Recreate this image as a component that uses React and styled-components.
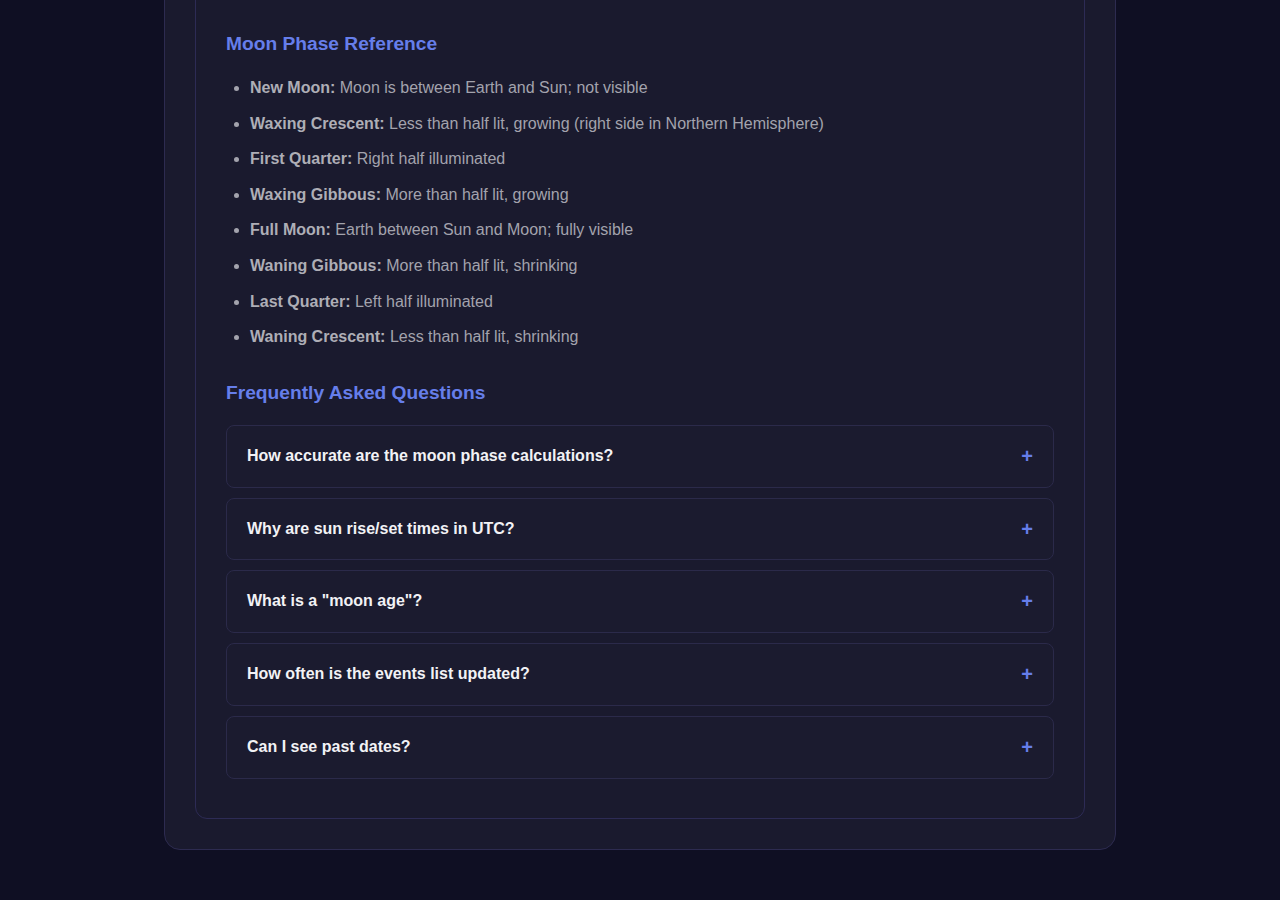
import React from 'react';
import styled, { createGlobalStyle } from 'styled-components';

const GlobalStyle = createGlobalStyle`
  html, body {
    margin: 0;
    padding: 0;
    background: #0f0f23;
    font-family: "Liberation Sans", Arial, sans-serif;
  }
`;

const Page = styled.div`
  padding: 0 0 50px;
  overflow: hidden;
`;

const OuterCard = styled.div`
  width: 952px;
  box-sizing: border-box;
  margin: -61px auto 0;
  padding: 30px;
  background: #1a1a2e;
  border: 1px solid #2d2b50;
  border-radius: 16px;
`;

const InnerCard = styled.section`
  padding: 30px;
  background: #1a1a2e;
  border: 1px solid #2d2b55;
  border-radius: 12px;
`;

const SectionTitle = styled.h3`
  margin: 32px 0 20px;
  font-size: 19.2px;
  font-weight: 700;
  color: #667eea;
  line-height: 22px;
`;

const PhaseList = styled.ul`
  margin: 0;
  padding-left: 24px;
  color: #a3a3ad;
  font-size: 16px;
`;

const PhaseItem = styled.li`
  line-height: 1.6;
  margin-bottom: 10px;

  strong {
    color: #aeaeb6;
  }
`;

const FaqList = styled.div`
  display: flex;
  flex-direction: column;
  gap: 10px;
  margin-top: 21px;
  margin-bottom: 9px;
`;

const FaqItem = styled.div`
  display: flex;
  align-items: center;
  justify-content: space-between;
  padding: 20px;
  border: 1px solid #2b2a4a;
  border-radius: 8px;
  background: #1b1b2f;
  cursor: pointer;
`;

const Question = styled.span`
  font-size: 16px;
  font-weight: 700;
  line-height: 20.8px;
  color: #f2f2f5;
`;

const Toggle = styled.span`
  font-size: 20px;
  line-height: 20.8px;
  font-weight: 700;
  color: #667eea;
`;

const phases = [
  ['New Moon:', 'Moon is between Earth and Sun; not visible'],
  ['Waxing Crescent:', 'Less than half lit, growing (right side in Northern Hemisphere)'],
  ['First Quarter:', 'Right half illuminated'],
  ['Waxing Gibbous:', 'More than half lit, growing'],
  ['Full Moon:', 'Earth between Sun and Moon; fully visible'],
  ['Waning Gibbous:', 'More than half lit, shrinking'],
  ['Last Quarter:', 'Left half illuminated'],
  ['Waning Crescent:', 'Less than half lit, shrinking'],
];

const questions = [
  'How accurate are the moon phase calculations?',
  'Why are sun rise/set times in UTC?',
  'What is a "moon age"?',
  'How often is the events list updated?',
  'Can I see past dates?',
];

export default function App() {
  return (
    <Page>
      <GlobalStyle />
      <OuterCard>
        <InnerCard>
          <SectionTitle>Moon Phase Reference</SectionTitle>
          <PhaseList>
            {phases.map(([label, text]) => (
              <PhaseItem key={label}>
                <strong>{label}</strong> {text}
              </PhaseItem>
            ))}
          </PhaseList>

          <SectionTitle>Frequently Asked Questions</SectionTitle>
          <FaqList>
            {questions.map(q => (
              <FaqItem key={q}>
                <Question>{q}</Question>
                <Toggle>+</Toggle>
              </FaqItem>
            ))}
          </FaqList>
        </InnerCard>
      </OuterCard>
    </Page>
  );
}
